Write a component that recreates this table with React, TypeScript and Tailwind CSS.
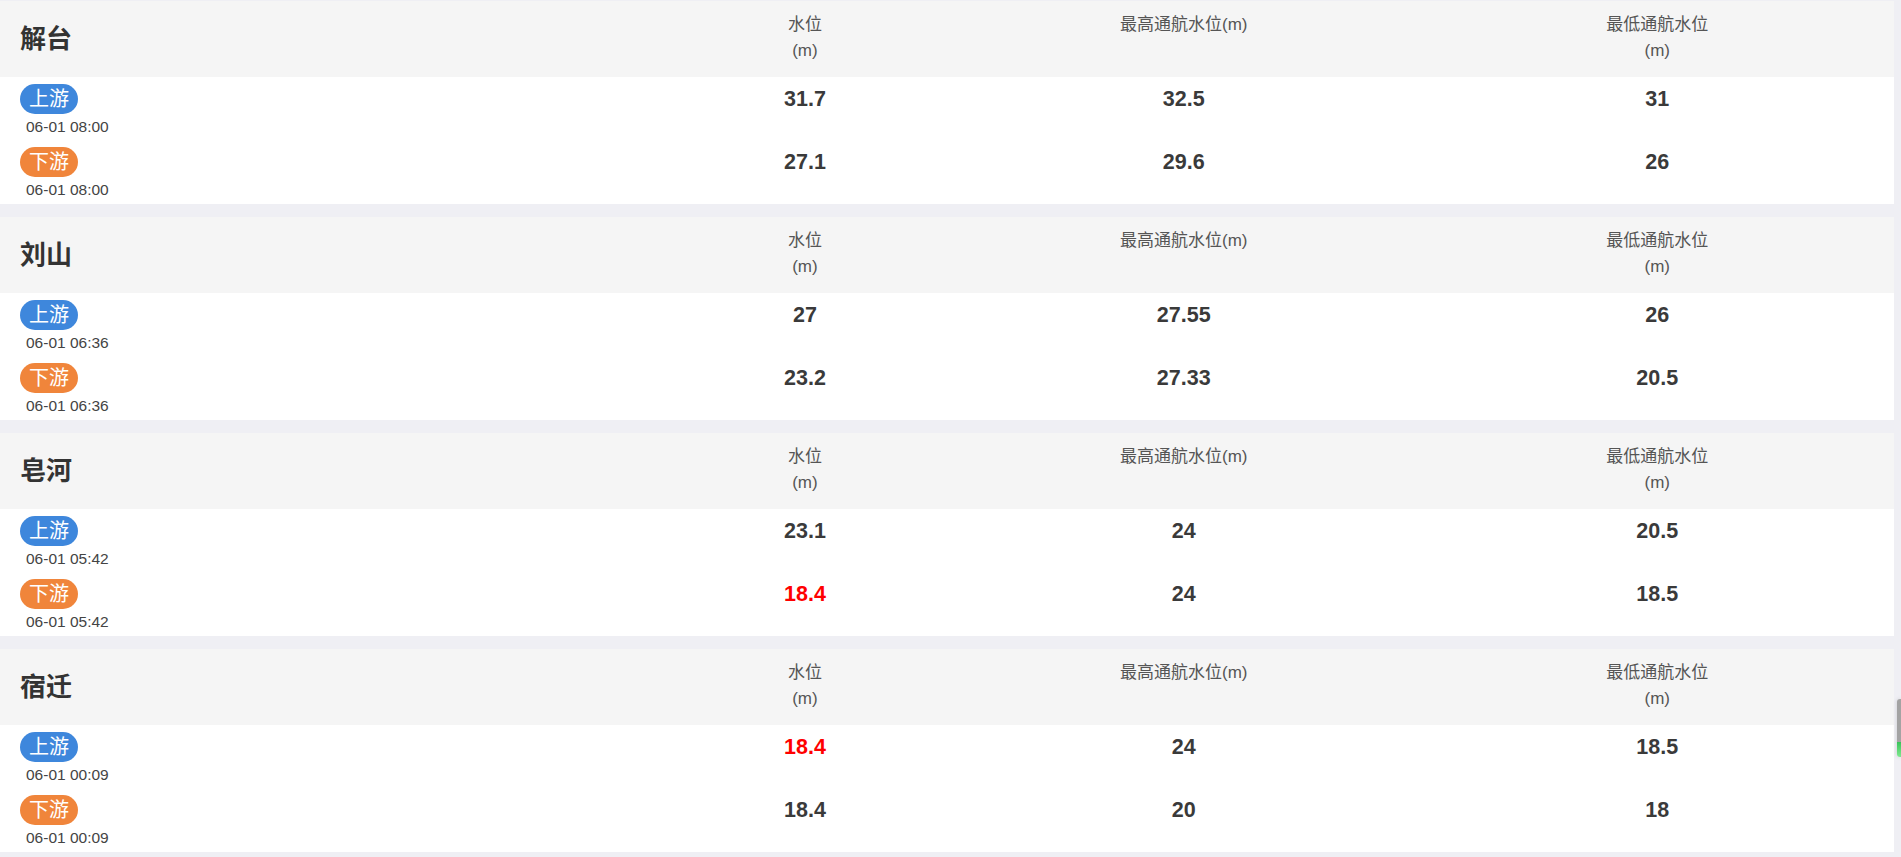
import React from "react";

type Row = { t: string; v: [string, string, string]; red?: boolean };
type Station = { name: string; up: Row; down: Row };

const data: Station[] = [
  { name: "解台", up: { t: "06-01 08:00", v: ["31.7", "32.5", "31"] }, down: { t: "06-01 08:00", v: ["27.1", "29.6", "26"] } },
  { name: "刘山", up: { t: "06-01 06:36", v: ["27", "27.55", "26"] }, down: { t: "06-01 06:36", v: ["23.2", "27.33", "20.5"] } },
  { name: "皂河", up: { t: "06-01 05:42", v: ["23.1", "24", "20.5"] }, down: { t: "06-01 05:42", v: ["18.4", "24", "18.5"], red: true } },
  { name: "宿迁", up: { t: "06-01 00:09", v: ["18.4", "24", "18.5"], red: true }, down: { t: "06-01 00:09", v: ["18.4", "20", "18"] } },
];

const FONT = { fontFamily: '"Liberation Sans", Arial, "Noto Sans CJK SC", sans-serif' };

function SubRow({ label, row, up, tall }: { label: string; row: Row; up: boolean; tall?: boolean }) {
  return (
    <div className={`grid grid-cols-[35%_15%_25%_25%] ${tall ? "h-[64px]" : "h-[63px]"}`}>
      <div className="flex flex-col items-start pl-5 pt-[7px]">
        <span
          className={`h-[30px] px-[9px] rounded-full flex items-center text-[20px] text-white leading-none ${
            up ? "bg-[#3e87dc]" : "bg-[#f0853b]"
          }`}
        >
          {label}
        </span>
        <span className="pl-[6px] text-[15.5px] leading-[26px] text-[#444]">{row.t}</span>
      </div>
      {row.v.map((v, i) => (
        <div key={i} className="pt-[7px]">
          <div
            className={`h-[30px] flex items-center justify-center text-[21.5px] font-bold ${
              i === 0 && row.red ? "text-[#ff0000]" : "text-[#3a3a3a]"
            }`}
          >
            {v}
          </div>
        </div>
      ))}
    </div>
  );
}

function Card({ s }: { s: Station }) {
  return (
    <div className="w-full">
      <div className="grid grid-cols-[35%_15%_25%_25%] h-[76px] bg-[#f5f5f5]">
        <div className="flex items-center pl-5 text-[26px] font-bold text-[#333]">{s.name}</div>
        <div className="pt-[11px] text-center text-[17px] leading-[26px] text-[#555]">
          水位
          <br />
          (m)
        </div>
        <div className="pt-[11px] text-center text-[17px] leading-[26px] text-[#555]">最高通航水位(m)</div>
        <div className="pt-[11px] text-center text-[17px] leading-[26px] text-[#555]">
          最低通航水位
          <br />
          (m)
        </div>
      </div>
      <div className="bg-white h-[127px]">
        <SubRow label="上游" row={s.up} up />
        <SubRow label="下游" row={s.down} up={false} tall />
      </div>
    </div>
  );
}

export default function App() {
  return (
    <div className="relative w-[1901px] h-[857px] overflow-hidden bg-[#efeff4]" style={FONT}>
      <div className="w-[1894px] pt-px flex flex-col gap-[13px]">
        {data.map((s) => (
          <Card key={s.name} s={s} />
        ))}
      </div>
      <div className="absolute right-0 top-[699px] w-[4px] h-[58px] rounded-l-[3px] overflow-hidden shadow-[0_0_4px_rgba(0,0,0,0.15)] flex flex-col">
        <div className="flex-1 bg-[#a3a3a3]" />
        <div className="h-[15px] bg-gradient-to-b from-[#36c45a] to-[#7ee88f]" />
      </div>
    </div>
  );
}
